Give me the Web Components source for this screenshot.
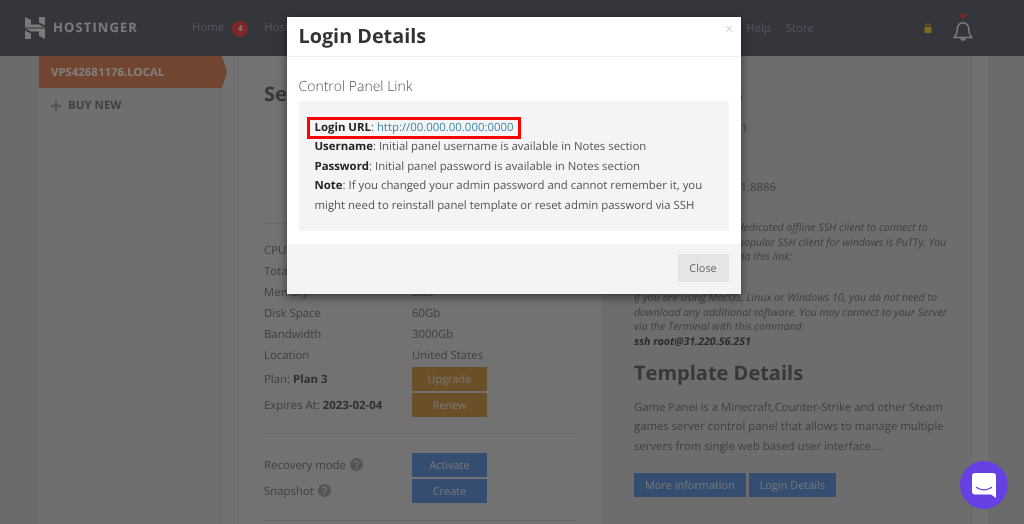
<!DOCTYPE html>
<html lang="en">
<head>
<meta charset="utf-8">
<title>VPS - Login Details</title>
<style>
  html, body { margin: 0; height: 100%; }
  body {
    background: #d6d6d6;
    color: #808080;
    font: 11.4px/19.5px "Open Sans", "Liberation Sans", sans-serif;
    text-rendering: geometricPrecision;
    overflow: hidden;
    position: relative;
    filter: blur(0.3px);
  }
</style>
</head>
<body>
  <hp-header></hp-header>
  <hp-layout>
    <hp-sidebar slot="side" active="VPS42681176.LOCAL"></hp-sidebar>
    <server-info slot="left"></server-info>
    <access-info slot="right"></access-info>
  </hp-layout>

  <hp-modal heading="Login Details">
    <h4 slot="subtitle">Control Panel Link</h4>
    <login-details url="http://00.000.00.000:0000"></login-details>
  </hp-modal>

  <chat-launcher></chat-launcher>

<script>
/* top bar */
class HpHeader extends HTMLElement {
  constructor() {
    super();
    this.attachShadow({ mode: 'open' });
    this.shadowRoot.innerHTML = `
      <style>
        :host { display: flex; align-items: center; height: 56px; background: #6a6c78; padding: 0 50px 0 25px; box-sizing: border-box; }
        .logo { display: flex; align-items: center; width: 167px; color: #f4f4f4; font-weight: 700; font-size: 13px; letter-spacing: 1.1px; }
        .logo svg { margin-right: 8px; flex: none; }
        nav { display: flex; align-items: center; color: #a8a8bc; font-size: 11.4px; }
        .badge { width: 16px; height: 16px; border-radius: 50%; background: #ff5050; color: #fff; font-size: 8px; font-weight: 700; line-height: 16px; text-align: center; margin: 2px 16px 0 8px; }
        .right { margin-left: auto; display: flex; align-items: center; color: #a8a8bc; font-size: 11.4px; }
        .right span { margin: 2px 15px 0 0; }
        .right span:nth-child(2) { margin-right: 0; }
        .lock { margin: 0 20px 0 110px; display: block; }
        .bell { display: block; margin-top: 2px; }
      </style>
      <div class="logo">
        <svg width="20" height="22" viewBox="0 0 20 22" fill="#f4f4f4">
          <polygon points="0,0 6,3 6,7.5 14,7.5 20,10.5 0,10.5"/>
          <polygon points="20,22 14,19 14,14.5 6,14.5 0,11.5 20,11.5"/>
          <polygon points="14,0 20,0 20,8.5 14,5.5"/>
          <polygon points="6,22 0,22 0,13.5 6,16.5"/>
        </svg>
        HOSTINGER
      </div>
      <nav>Home<span class="badge">4</span>Hosting</nav>
      <div class="right">
        <span>Help</span><span>Store</span>
        <svg class="lock" width="8" height="10" viewBox="0 0 8 10">
          <path d="M2 4.5V3a2 2 0 0 1 4 0v1.500" fill="none" stroke="#f5d63d" stroke-width="1.2"/>
          <rect x="0.500" y="4" width="7" height="6" rx="0.800" fill="#f5d63d"/>
        </svg>
        <svg class="bell" width="22" height="32" viewBox="0 0 22 32" fill="none">
          <circle cx="11" cy="3" r="2.600" fill="#ff4a4a"/>
          <path d="M2 24.500c1.800-1.800 3.200-3.500 3.200-7.500 0-4.300 2.300-7.200 5.800-7.200s5.800 2.900 5.800 7.200c0 4 1.400 5.700 3.200 7.500z" stroke="#fff" stroke-width="1.400" stroke-linejoin="round"/>
          <path d="M8.300 25.500a2.700 2.200 0 0 0 5.400 0z" fill="#fff"/>
        </svg>
      </div>`;
  }
}

/* sidebar + two column panel */
class HpLayout extends HTMLElement {
  constructor() {
    super();
    this.attachShadow({ mode: 'open' });
    this.shadowRoot.innerHTML = `
      <style>
        :host { display: flex; margin-left: 39px; width: 949px; height: 468px; background: #e2e2e2; }
        .side { width: 183px; background: #dedede; border-right: 1px solid #d4d4d4; box-sizing: border-box; flex: none; }
        .panel { display: flex; margin-left: 16px; width: 734px; flex: none; border-left: 1px solid #d4d4d4; border-right: 1px solid #d4d4d4; box-sizing: border-box; background: #e4e4e4; }
        .left { width: 363px; flex: none; padding: 0 25px; box-sizing: border-box; }
        .right { flex: 1; background: #dadada; border-left: 1px solid #d4d4d4; padding: 0 24px 0 31px; min-width: 0; }
      </style>
      <div class="side"><slot name="side"></slot></div>
      <div class="panel">
        <div class="left"><slot name="left"></slot></div>
        <div class="right"><slot name="right"></slot></div>
      </div>`;
  }
}

class HpSidebar extends HTMLElement {
  connectedCallback() {
    this.attachShadow({ mode: 'open' });
    this.shadowRoot.innerHTML = `
      <style>
        :host { display: block; font-size: 11.4px; font-weight: 700; }
        .tab { position: relative; height: 32px; line-height: 34px; padding-left: 12px; color: #fff; background: #e28a5e; width: 183px; box-sizing: border-box; }
        .tab::after { content: ""; position: absolute; left: 183px; top: 0; border-left: 5px solid #e28a5e; border-top: 16px solid transparent; border-bottom: 16px solid transparent; }
        .buy { display: flex; align-items: center; padding: 8px 0 0 12px; color: #828282; font-size: 11.500px; }
        .buy svg { margin-right: 7px; }
      </style>
      <div class="tab">${this.getAttribute('active')}</div>
      <div class="buy">
        <svg width="10" height="10" viewBox="0 0 10 10" fill="#a6a6a6"><path d="M3.800 0h2.400v3.800H10v2.400H6.200V10H3.800V6.200H0V3.800h3.800z"/></svg>
        BUY NEW
      </div>`;
  }
}

/* small coloured button used across the panel */
class HpButton extends HTMLElement {
  static get observedAttributes() { return ['tone']; }
  constructor() {
    super();
    this.attachShadow({ mode: 'open' });
    this.shadowRoot.innerHTML = `
      <style>
        :host { display: inline-block; height: 24px; line-height: 26px; font-size: 10.9px; text-align: center; color: #eee; box-sizing: border-box; background: #6a9ae0; padding: 0 11px; }
        :host([tone="amber"]) { background: #d6a04e; }
        :host([tone="grey"]) { background: #e5e5e5; color: #666; }
      </style>
      <slot></slot>`;
  }
}

class ServerInfo extends HTMLElement {
  connectedCallback() {
    const specs = [
      ['CPU', '4 Cores'], ['Total', '3Gb'], ['Memory', '3Gb'],
      ['Disk Space', '60Gb'], ['Bandwidth', '3000Gb'], ['Location', 'United States']
    ];
    this.attachShadow({ mode: 'open' });
    this.shadowRoot.innerHTML = `
      <style>
        :host { display: block; font-size: 11.4px; }
        h2 { margin: 0; padding-top: 23px; font-size: 20px; line-height: 30px; font-weight: 700; color: #707070; }
        hr { border: 0; border-top: 1px solid #d2d2d2; margin: 0; width: 312px; }
        .top { height: 114px; }
        .row { display: grid; grid-template-columns: 148px 75px; height: 21px; line-height: 21px; }
        .row.action { height: 26px; line-height: 26px; align-items: center; }
        .row.action span { padding-top: 2px; }
        b { color: #5e5e5e; }
        hp-button { display: block; padding: 0; width: 75px; }
        .help { display: inline-block; vertical-align: -2px; margin-left: 1px; }
      </style>
      <h2>Server Details</h2>
      <div class="top"></div>
      <hr>
      <div style="height:16px"></div>
      ${specs.map(s => `<div class="row"><span>${s[0]}</span><span>${s[1]}</span></div>`).join('')}
      <div class="row action" style="margin-top:-1px"><span>Plan: <b>Plan 3</b></span><hp-button tone="amber">Upgrade</hp-button></div>
      <div class="row action"><span>Expires At: <b>2023-02-04</b></span><hp-button tone="amber">Renew</hp-button></div>
      <div style="height:16px"></div>
      <hr>
      <div style="height:17px"></div>
      <div class="row action"><span>Recovery mode ${this._help()}</span><hp-button>Activate</hp-button></div>
      <div class="row action"><span>Snapshot ${this._help()}</span><hp-button>Create</hp-button></div>
      <div style="height:17px"></div>
      <hr>`;
  }

  _help() {
    return `<svg class="help" width="13" height="13" viewBox="0 0 13 13"><circle cx="6.500" cy="6.500" r="6.500" fill="#aaa"/><path d="M4.500 5a2 1.800 0 1 1 3 1.600c-.7.400-1 .7-1 1.500" fill="none" stroke="#e4e4e4" stroke-width="1.400"/><circle cx="6.500" cy="10" r=".9" fill="#e4e4e4"/></svg>`;
  }
}

class AccessInfo extends HTMLElement {
  connectedCallback() {
    this.attachShadow({ mode: 'open' });
    this.shadowRoot.innerHTML = `
      <style>
        :host { display: block; font-size: 11.4px; }
        h2 { margin: 0; padding-top: 23px; font-size: 20px; line-height: 30px; font-weight: 700; color: #707070; }
        .lines { padding-top: 10px; height: 102px; line-height: 19.500px; }
        .lines div { height: 19.500px; }
        .note { font-style: italic; font-size: 10.600px; line-height: 14.670px; white-space: nowrap; }
        .note p { margin: 0 0 26px; }
        .note b { color: #555; }
        h3 { margin: 0; padding-top: 8px; font-size: 20px; line-height: 30px; font-weight: 700; color: #707070; }
        .desc { margin: 10px 0 0; font-size: 11.350px; white-space: nowrap; }
        .actions { display: flex; gap: 3px; margin-top: 17px; }
      </style>
      <h2>SSH Access</h2>
      <div class="lines">
        <div>SSH IP: 31.220.56.251</div>
        <div>&nbsp;</div>
        <div>&nbsp;</div>
        <div>https://31.220.56.251:8886</div>
      </div>
      <div class="note">
        <p>You will need to use a dedicated offline SSH client to connect to<br>your Server. The most popular SSH client for windows is PuTTy. You<br>may also download it via this link:</p>
        If you are using MacOS, Linux or Windows 10, you do not need to<br>
        download any additional software. You may connect to your Server<br>
        via the Terminal with this command:<br>
        <b>ssh root@31.220.56.251</b>
      </div>
      <h3>Template Details</h3>
      <p class="desc">Game Panel is a Minecraft,Counter-Strike and other Steam<br>games server control panel that allows to manage multiple<br>servers from single web based user interface....</p>
      <div class="actions">
        <hp-button>More information</hp-button>
        <hp-button>Login Details</hp-button>
      </div>`;
  }
}

/* dialog with its backdrop */
class HpModal extends HTMLElement {
  connectedCallback() {
    this.attachShadow({ mode: 'open' });
    this.shadowRoot.innerHTML = `
      <style>
        :host { position: absolute; inset: 0; display: flex; justify-content: center; align-items: flex-start; background: rgba(0,0,0,.5); padding: 17px 0 0 3px; box-sizing: border-box; color: #555; }
        .dialog { width: 454px; background: #fff; box-shadow: 0 3px 9px rgba(0,0,0,.5); position: relative; }
        header { height: 39px; border-bottom: 1px solid #f2f2f2; padding: 0 12px; }
        h3 { margin: 0; font-size: 19.800px; line-height: 38px; font-weight: 700; color: #333; }
        .x { position: absolute; right: 7px; top: 2px; color: #d4d4d4; font-size: 15px; line-height: 20px; }
        .body { padding: 20px 12px 13px; }
        ::slotted(h4) { margin: 0 0 4px; font-weight: 300; font-size: 14px; line-height: 20px; color: #555; }
        footer { background: #f4f4f4; height: 50px; padding: 10px 12px 0; box-sizing: border-box; text-align: right; }
        hp-button { height: 28px; line-height: 30px; width: 51px; padding: 0; }
      </style>
      <div class="dialog">
        <header><h3>${this.getAttribute('heading')}</h3><span class="x">×</span></header>
        <div class="body">
          <slot name="subtitle"></slot>
          <slot></slot>
        </div>
        <footer><hp-button tone="grey">Close</hp-button></footer>
      </div>`;
  }
}

class LoginDetails extends HTMLElement {
  connectedCallback() {
    this.attachShadow({ mode: 'open' });
    this.shadowRoot.innerHTML = `
      <style>
        :host { display: block; background: #f4f4f4; padding: 16.500px 16px 16px; font-size: 11.4px; line-height: 19.500px; color: #555; white-space: nowrap; }
        div { height: 19.500px; }
        b { color: #222; font-weight: 700; }
        a { color: #3d87ab; text-decoration: none; }
        .url { display: inline-block; outline: 3px solid #f00; padding: 0 5px; margin-left: -5px; line-height: 16px; vertical-align: top; margin-top: 2.500px; }
      </style>
      <div><span class="url"><b>Login URL</b>: <a href="#">${this.getAttribute('url')}</a></span></div>
      <div><b>Username</b>: Initial panel username is available in Notes section</div>
      <div><b>Password</b>: Initial panel password is available in Notes section</div>
      <div><b>Note</b>: If you changed your admin password and cannot remember it, you</div>
      <div>might need to reinstall panel template or reset admin password via SSH</div>`;
  }
}

class ChatLauncher extends HTMLElement {
  constructor() {
    super();
    this.attachShadow({ mode: 'open' });
    this.shadowRoot.innerHTML = `
      <style>
        :host { position: absolute; left: 960px; top: 461px; width: 48px; height: 48px; border-radius: 50%; background: #6640e2; display: flex; align-items: center; justify-content: center; }
      </style>
      <svg width="24" height="25" viewBox="0 0 24 25">
        <path d="M3 0h18a3 3 0 0 1 3 3v22l-5-3.500H3a3 3 0 0 1-3-3V3a3 3 0 0 1 3-3z" fill="#fff"/>
        <path d="M4.500 14.500c4.500 3 10.500 3 15 0" fill="none" stroke="#6640e2" stroke-width="1.500" stroke-linecap="round"/>
      </svg>`;
  }
}

customElements.define('hp-button', HpButton);
customElements.define('hp-header', HpHeader);
customElements.define('hp-layout', HpLayout);
customElements.define('hp-sidebar', HpSidebar);
customElements.define('server-info', ServerInfo);
customElements.define('access-info', AccessInfo);
customElements.define('hp-modal', HpModal);
customElements.define('login-details', LoginDetails);
customElements.define('chat-launcher', ChatLauncher);
</script>
</body>
</html>
